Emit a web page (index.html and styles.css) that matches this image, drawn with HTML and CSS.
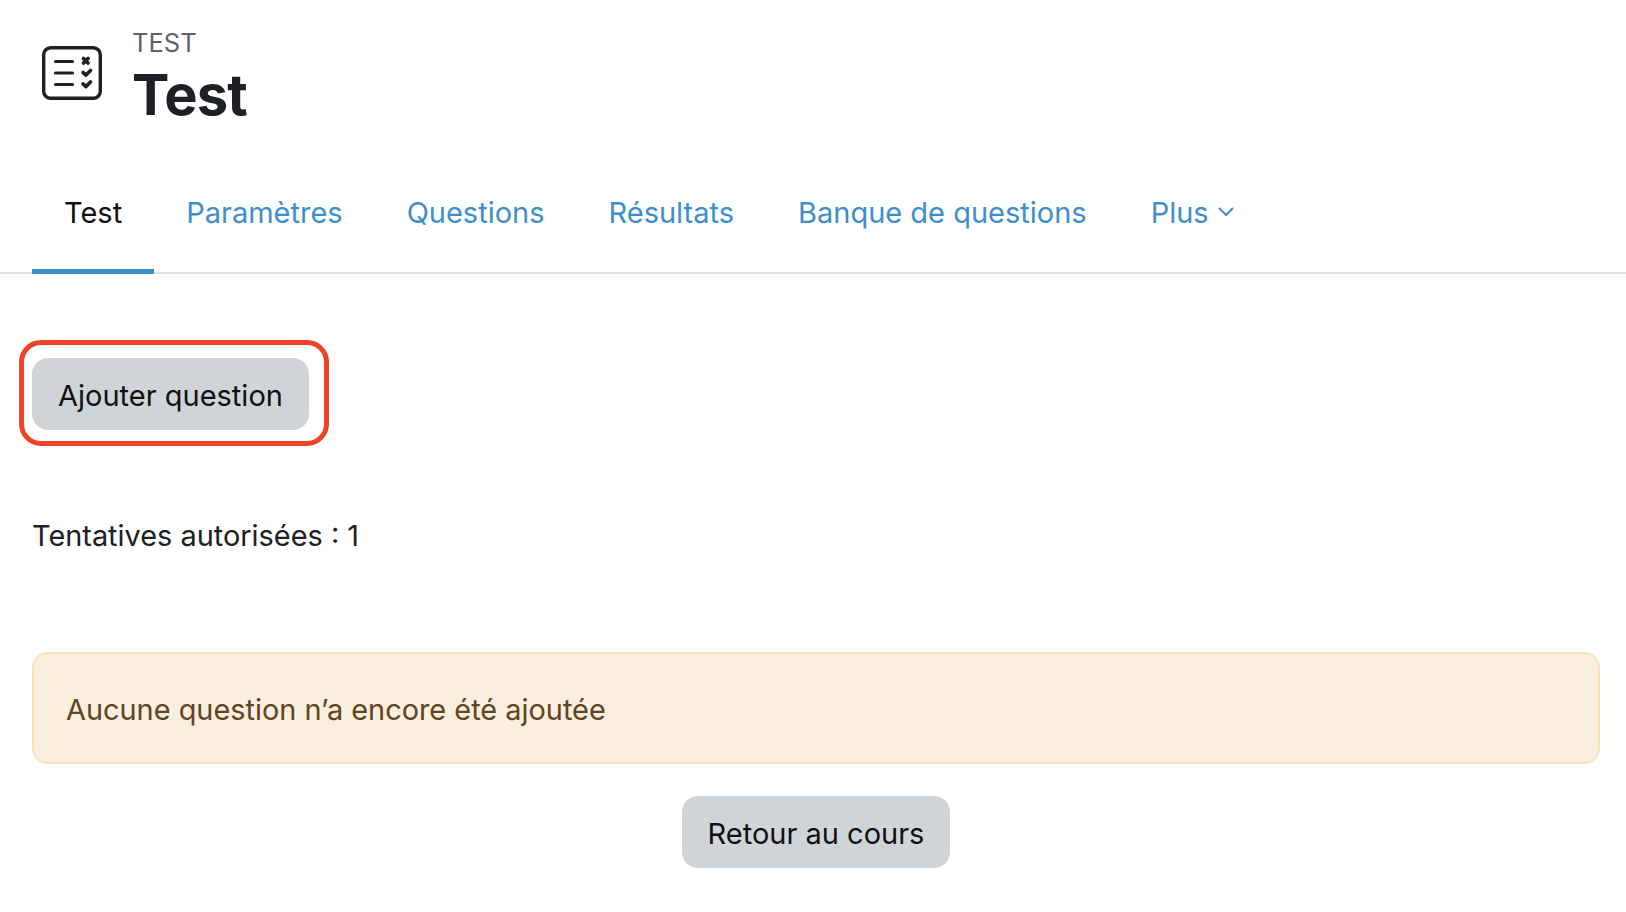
FILE: index.html
```html
<!DOCTYPE html>
<html lang="fr">
<head>
<meta charset="utf-8">
<title>Test</title>
<link rel="stylesheet" href="styles.css">
</head>
<body>
<div class="page">
  <header class="head">
    <svg class="head-icon" viewBox="0 0 60 54" fill="none" stroke="#1d2125" stroke-linecap="round" stroke-linejoin="round">
      <rect x="1.700" y="1.700" width="56.600" height="50.600" rx="7" stroke-width="3.400"/>
      <path d="M13.500 15.500H30.500M13.500 27H30.500M13.500 38.500H30.500" stroke-width="3.200"/>
      <path d="M41.500 12.500L46 17M46 12.500L41.500 17" stroke-width="3.800"/>
      <path d="M41 26.500L44 29L48.500 24.500M41 38L44 40.500L48.500 36" stroke-width="3.600"/>
    </svg>
    <div class="head-text">
      <div class="kicker">TEST</div>
      <h1 class="title">Test</h1>
    </div>
  </header>
  <nav class="tabs">
    <a class="tab active">Test</a>
    <a class="tab">Paramètres</a>
    <a class="tab">Questions</a>
    <a class="tab">Résultats</a>
    <a class="tab">Banque de questions</a>
    <a class="tab">Plus<svg class="chev" viewBox="0 0 16 10" fill="none" stroke="#3d8ecb" stroke-width="2" stroke-linecap="round" stroke-linejoin="round"><path d="M1.500 1.500L8 8L14.500 1.500"/></svg></a>
  </nav>
  <div class="add-row">
    <div class="highlight">
      <button class="btn">Ajouter question</button>
    </div>
  </div>
  <p class="attempts">Tentatives autorisées : 1</p>
  <div class="alert">Aucune question n’a encore été ajoutée</div>
  <div class="back-row">
    <button class="btn">Retour au cours</button>
  </div>
</div>
</body>
</html>
```
FILE: styles.css
```css
* { box-sizing: border-box; }
html, body { margin: 0; background: #fff; }
body { font-family: "Inter", "Liberation Sans", sans-serif; color: #1d2125; height: 912px; overflow: hidden; }
.page { padding: 0 26px 0 32px; }
.head { display: flex; align-items: flex-start; height: 160px; }
.head-icon { width: 60px; height: 54px; margin: 46px 0 0 10px; flex: none; }
.head-text { margin-left: 30px; padding-top: 27px; }
.kicker { font-size: 25.500px; line-height: 32px; color: #5f6367; }
.title { margin: 3px 0 0; font-size: 56px; line-height: 66px; font-weight: 700; letter-spacing: -0.800px; }
.tabs { display: flex; margin: 0 -26px 0 -32px; padding-left: 32px; height: 114px; border-bottom: 2px solid #dee2e6; }
.tab { display: flex; align-items: center; padding: 0 32px 10px; height: 114px; font-size: 29px; color: #3d8ecb; }
.tab.active { color: #111; border-bottom: 5px solid #3d8ecb; padding-bottom: 5px; }
.chev { width: 16px; height: 10px; margin-left: 9px; }
.add-row { display: flex; padding-top: 84px; }
.highlight { position: relative; }
.highlight::after { content: ""; position: absolute; left: -13px; top: -18px; right: -20px; bottom: -16px; border: 5px solid #ee4229; border-radius: 22px; }
.btn { display: block; border: 0; height: 72px; padding: 3px 26px 0; border-radius: 16px; background: #cfd4d8; color: #111; font: 400 29px/1 "Inter", "Liberation Sans", sans-serif; }
.attempts { margin: 86px 0 0; font-size: 28.900px; line-height: 40px; color: #1d2125; }
.alert { margin-top: 96px; height: 112px; padding: 2px 32px 0; display: flex; align-items: center; border: 2px solid #f8e0bb; border-radius: 16px; background: #faeedf; color: #5f4522; font-size: 28.900px; }
.back-row { display: flex; justify-content: center; margin-top: 32px; }
```
